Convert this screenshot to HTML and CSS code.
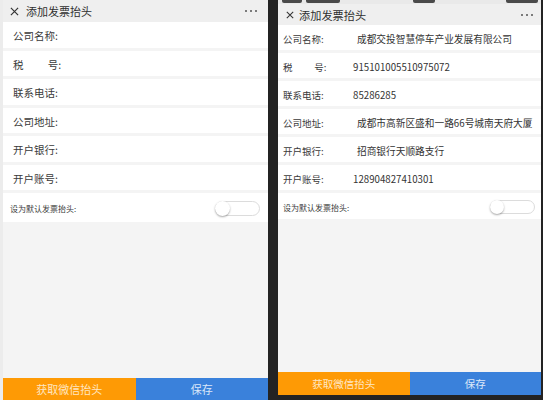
FILE: index.html
```html
<!DOCTYPE html>
<html lang="zh-CN">
<head>
<meta charset="utf-8">
<title>添加发票抬头</title>
<link rel="stylesheet" href="styles.css">
</head>
<body>
<div class="stage">
  <!-- empty form -->
  <section class="phone phone-a">
    <header class="nav">
      <svg class="close" viewBox="0 0 10 10"><path d="M1 1L9 9M9 1L1 9"/></svg>
      <span class="title">添加发票抬头</span>
      <span class="more"><i></i><i></i><i></i></span>
    </header>
    <div class="form">
      <div class="row"><span class="label">公司名称:</span></div>
      <div class="row"><span class="label">税<i class="sp"></i>号:</span></div>
      <div class="row"><span class="label">联系电话:</span></div>
      <div class="row"><span class="label">公司地址:</span></div>
      <div class="row"><span class="label">开户银行:</span></div>
      <div class="row"><span class="label">开户账号:</span></div>
      <div class="row row-switch"><span class="small">设为默认发票抬头:</span><span class="switch"><span class="knob"></span></span></div>
    </div>
    <div class="fill"></div>
    <footer class="actions">
      <button class="btn btn-wx">获取微信抬头</button>
      <button class="btn btn-save">保存</button>
    </footer>
  </section>

  <!-- filled form -->
  <section class="phone phone-b">
    <div class="status">
      <span class="st s1"></span><span class="st s2"></span><span class="st s3"></span><span class="st s4"></span>
    </div>
    <header class="nav">
      <svg class="close" viewBox="0 0 10 10"><path d="M1 1L9 9M9 1L1 9"/></svg>
      <span class="title">添加发票抬头</span>
      <span class="more"><i></i><i></i><i></i></span>
    </header>
    <div class="form">
      <div class="row"><span class="label">公司名称:</span><span class="value cjk">成都交投智慧停车产业发展有限公司</span></div>
      <div class="row"><span class="label">税<i class="sp"></i>号:</span><span class="value">915101005510975072</span></div>
      <div class="row"><span class="label">联系电话:</span><span class="value">85286285</span></div>
      <div class="row"><span class="label">公司地址:</span><span class="value cjk">成都市高新区盛和一路66号城南天府大厦</span></div>
      <div class="row"><span class="label">开户银行:</span><span class="value cjk">招商银行天顺路支行</span></div>
      <div class="row"><span class="label">开户账号:</span><span class="value">128904827410301</span></div>
      <div class="row row-switch"><span class="small">设为默认发票抬头:</span><span class="switch"><span class="knob"></span></span></div>
    </div>
    <div class="fill"></div>
    <footer class="actions">
      <button class="btn btn-wx">获取微信抬头</button>
      <button class="btn btn-save">保存</button>
    </footer>
  </section>
</div>
</body>
</html>
```

FILE: styles.css
```css
* { box-sizing: border-box; }

html, body {
  margin: 0;
  padding: 0;
  background: #232323;
}

body {
  font-family: "Noto Sans CJK SC", "Noto Sans", sans-serif;
  color: #3a3a3a;
}

.stage {
  display: flex;
  align-items: flex-start;
  gap: 10px;
  width: 543px;
  height: 400px;
  overflow: hidden;
}

.phone {
  display: flex;
  flex-direction: column;
  background: #f4f4f4;
  overflow: hidden;
}

.phone-a {
  width: 268px;
  height: 400px;
  border-left: 3px solid #ececec;
}

.phone-b {
  width: 263px;
  height: 395px;
}

/* status strip, cut off at the top */
.status {
  height: 4px;
  background: #e9e9e9;
  position: relative;
  flex: none;
}
.st {
  position: absolute;
  top: 0;
  height: 3px;
  background: #4a4a4a;
  border-radius: 0 0 2px 2px;
}
.s1 { left: 4px; width: 20px; }
.s2 { left: 28px; width: 34px; }
.s3 { left: 135px; width: 22px; }
.s4 { left: 228px; width: 32px; }

.nav {
  display: flex;
  align-items: center;
  background: #efefef;
  flex: none;
}
.phone-a .nav { height: 22px; padding: 0 11px 0 7px; }
.phone-b .nav { height: 21px; padding: 1px 8px 0 8px; }

.close {
  width: 9px;
  height: 9px;
  fill: none;
  stroke: #333;
  stroke-width: 1.3;
}
.phone-b .close { width: 8px; height: 8px; }

.title {
  margin-left: 7px;
  font-size: 11px;
  color: #2e2e2e;
}
.phone-b .title { margin-left: 5px; font-size: 11.2px; }

.more {
  margin-left: auto;
  display: flex;
  gap: 3px;
}
.more i {
  width: 2px;
  height: 2px;
  border-radius: 50%;
  background: #555;
}

.form {
  display: flex;
  flex-direction: column;
  gap: 3px;
  flex: none;
}

.row {
  display: flex;
  align-items: center;
  background: #fff;
  padding-top: 2px;
}
.phone-a .row { height: 25.5px; padding-left: 10px; font-size: 10.5px; }
.phone-b .row { height: 25px; padding-left: 5px; font-size: 9.5px; }

.label { color: #3a3a3a; flex: none; }
.sp { display: inline-block; width: 2.3em; }
.phone-b .label { width: 70px; }

.value { color: #333; font-size: 9.7px; white-space: nowrap; }
.value.cjk { padding-left: 4px; }

.row-switch { justify-content: space-between; }
.phone-a .row-switch { height: 29px; padding-left: 7px; padding-right: 8px; }
.phone-b .row-switch { height: 26px; padding-left: 5px; padding-right: 6px; }

.small { font-size: 8px; color: #3a3a3a; }

.switch {
  position: relative;
  width: 45px;
  height: 15px;
  border: 1px solid #dcdcdc;
  border-radius: 8px;
  background: #fff;
}
.phone-b .switch { height: 14px; }
.knob {
  position: absolute;
  left: -1px;
  top: -1px;
  width: 15px;
  height: 15px;
  border-radius: 50%;
  background: #fff;
  box-shadow: 0 1px 2px rgba(0,0,0,0.35);
}
.phone-b .knob { width: 14px; height: 14px; }

.fill { flex: 1; }

.actions {
  display: flex;
  flex: none;
}
.phone-a .actions { height: 22px; }
.phone-b .actions { height: 23px; }

.btn {
  flex: 1;
  border: 0;
  margin: 0;
  padding: 0;
  font-family: inherit;
  font-size: 11px;
}
.phone-b .btn { font-size: 10.5px; }
.btn-wx { background: #fe9a05; color: #ffe7c4; }
.btn-save { background: #3a81db; color: #dbe8f9; }
```
